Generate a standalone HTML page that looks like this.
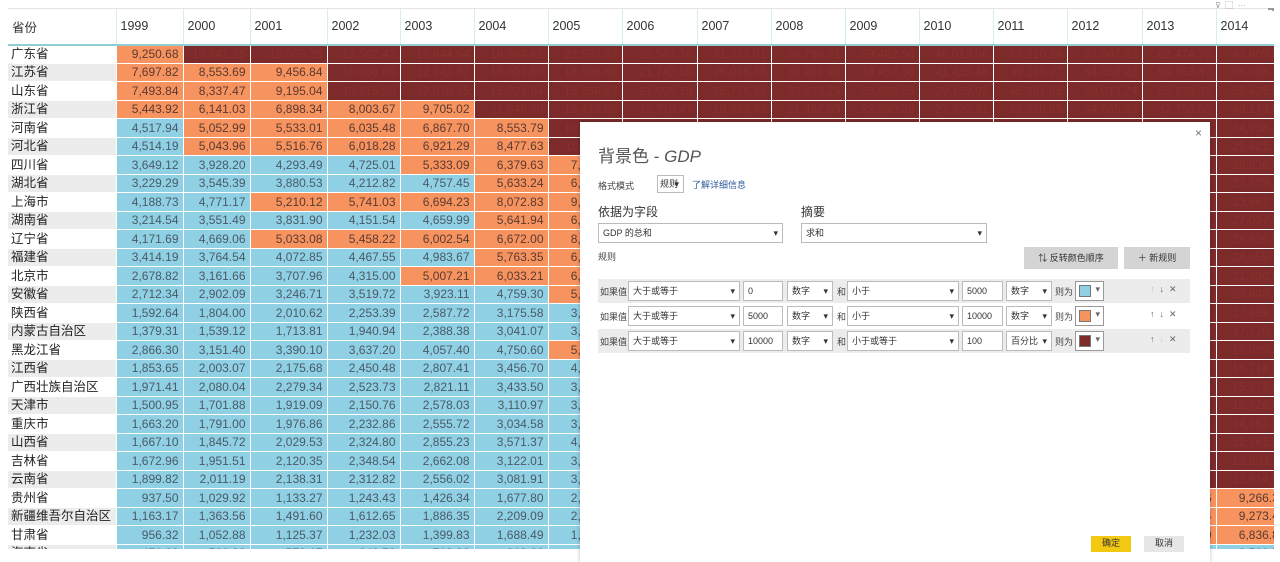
<!DOCTYPE html>
<html><head><meta charset="utf-8">
<style>
*{margin:0;padding:0;box-sizing:border-box}
body{width:1280px;height:549px;overflow:hidden;background:#fff;font-family:"Liberation Sans","Noto Sans CJK SC",sans-serif;position:relative}
#wrap{position:absolute;left:8px;top:8px;width:1266px;height:541px;overflow:hidden}
#tbl{border-collapse:collapse;table-layout:fixed;font-size:12px;width:1282px;min-width:1282px}
#tbl th{height:36px;font-weight:normal;text-align:left;padding-left:4px;color:#333;font-size:12.5px;border-left:1px solid #d6eef0;border-top:1px solid #e4e4e4;border-bottom:2px solid #8fcfd4;background:#fff}
#tbl th:first-child{border-left:none}
#tbl td{height:18.5px;text-align:right;padding-right:4px;white-space:nowrap;overflow:hidden;border:1px solid rgba(255,255,255,.2);line-height:16px}
#tbl td:first-child{text-align:left;padding-left:3px;font-size:12.5px;color:#222;background:#fff;border:none;border-bottom:1px solid #fff}
#tbl tr:nth-child(odd) td:first-child{background:#ececec}
.b{background:#8fd0e4;color:#4a5a66}
.o{background:#f7935f;color:#5a3a30}
.d{background:#7d2a2a;color:#873231}
#dlg{position:absolute;left:580px;top:122px;width:630px;height:440px;background:#fff;box-shadow:0 0 4px rgba(0,0,0,.25);font-size:9px;color:#444}
#dlg .a{position:absolute;white-space:nowrap}
.sel{position:absolute;border:1px solid #bbb;background:#fff;height:20px;line-height:18px;padding-left:4px;font-size:9px;color:#333}
.sel:after{content:"▾";position:absolute;right:4px;top:0;font-size:9px}
.inp{position:absolute;border:1px solid #bbb;background:#fff;height:20px;line-height:18px;padding-left:4px;font-size:9px;color:#333}
.rule{position:absolute;left:18px;width:592px;height:24px}
.sw{position:absolute;width:29px;height:20px;border:1px solid #999;background:#fff}
.sw i{position:absolute;left:3px;top:3px;width:12px;height:12px;border:1px solid #777}
.sw:after{content:"▾";position:absolute;right:3px;top:2px;font-size:9px;color:#666}
</style></head><body>
<div id="wrap">
<table id="tbl">
<colgroup><col style="width:108px"><col style="width:67px"><col style="width:67px"><col style="width:77px"><col style="width:73px"><col style="width:74px"><col style="width:74px"><col style="width:74px"><col style="width:75px"><col style="width:74px"><col style="width:74px"><col style="width:74px"><col style="width:74px"><col style="width:74px"><col style="width:75px"><col style="width:74px"><col style="width:74px"></colgroup>
<tr><th>省份</th><th>1999</th><th>2000</th><th>2001</th><th>2002</th><th>2003</th><th>2004</th><th>2005</th><th>2006</th><th>2007</th><th>2008</th><th>2009</th><th>2010</th><th>2011</th><th>2012</th><th>2013</th><th>2014</th></tr>
<tr><td>广东省</td><td class="o">9,250.68</td><td class="d">10,741.25</td><td class="d">12,039.25</td><td class="d">13,502.42</td><td class="d">15,844.64</td><td class="d">18,864.62</td><td class="d">22,557.37</td><td class="d">26,587.76</td><td class="d">31,777.01</td><td class="d">36,796.71</td><td class="d">39,482.56</td><td class="d">46,013.06</td><td class="d">53,210.28</td><td class="d">57,067.92</td><td class="d">62,474.79</td><td class="d">67,809.85</td></tr>
<tr><td>江苏省</td><td class="o">7,697.82</td><td class="o">8,553.69</td><td class="o">9,456.84</td><td class="d">10,606.85</td><td class="d">12,442.87</td><td class="d">15,003.60</td><td class="d">18,598.69</td><td class="d">21,742.05</td><td class="d">26,018.48</td><td class="d">30,981.98</td><td class="d">34,457.30</td><td class="d">41,425.48</td><td class="d">49,110.27</td><td class="d">54,058.22</td><td class="d">59,753.37</td><td class="d">65,088.32</td></tr>
<tr><td>山东省</td><td class="o">7,493.84</td><td class="o">8,337.47</td><td class="o">9,195.04</td><td class="d">10,275.50</td><td class="d">12,078.15</td><td class="d">15,021.84</td><td class="d">18,366.87</td><td class="d">21,900.19</td><td class="d">25,776.91</td><td class="d">30,933.28</td><td class="d">33,896.65</td><td class="d">39,169.92</td><td class="d">45,361.85</td><td class="d">50,013.24</td><td class="d">55,230.32</td><td class="d">59,426.59</td></tr>
<tr><td>浙江省</td><td class="o">5,443.92</td><td class="o">6,141.03</td><td class="o">6,898.34</td><td class="o">8,003.67</td><td class="o">9,705.02</td><td class="d">11,648.70</td><td class="d">13,417.68</td><td class="d">15,718.47</td><td class="d">18,753.73</td><td class="d">21,462.69</td><td class="d">22,990.35</td><td class="d">27,722.31</td><td class="d">32,318.85</td><td class="d">34,665.33</td><td class="d">37,756.58</td><td class="d">40,173.03</td></tr>
<tr><td>河南省</td><td class="b">4,517.94</td><td class="o">5,052.99</td><td class="o">5,533.01</td><td class="o">6,035.48</td><td class="o">6,867.70</td><td class="o">8,553.79</td><td class="d">10,587.42</td><td class="d">12,362.79</td><td class="d">15,012.46</td><td class="d">18,018.53</td><td class="d">19,480.46</td><td class="d">23,092.36</td><td class="d">26,931.03</td><td class="d">29,599.31</td><td class="d">32,191.30</td><td class="d">34,938.24</td></tr>
<tr><td>河北省</td><td class="b">4,514.19</td><td class="o">5,043.96</td><td class="o">5,516.76</td><td class="o">6,018.28</td><td class="o">6,921.29</td><td class="o">8,477.63</td><td class="d">10,012.11</td><td class="d">11,467.60</td><td class="d">13,607.32</td><td class="d">16,011.97</td><td class="d">17,235.48</td><td class="d">20,394.26</td><td class="d">24,515.76</td><td class="d">26,575.01</td><td class="d">28,442.95</td><td class="d">29,421.15</td></tr>
<tr><td>四川省</td><td class="b">3,649.12</td><td class="b">3,928.20</td><td class="b">4,293.49</td><td class="b">4,725.01</td><td class="o">5,333.09</td><td class="o">6,379.63</td><td class="o">7,385.10</td><td class="o">8,690.24</td><td class="d">10,562.39</td><td class="d">12,601.23</td><td class="d">14,151.28</td><td class="d">17,185.48</td><td class="d">21,026.68</td><td class="d">23,872.80</td><td class="d">26,392.07</td><td class="d">28,536.66</td></tr>
<tr><td>湖北省</td><td class="b">3,229.29</td><td class="b">3,545.39</td><td class="b">3,880.53</td><td class="b">4,212.82</td><td class="b">4,757.45</td><td class="o">5,633.24</td><td class="o">6,590.19</td><td class="o">7,617.47</td><td class="o">9,333.40</td><td class="d">11,328.92</td><td class="d">12,961.10</td><td class="d">15,967.61</td><td class="d">19,632.26</td><td class="d">22,250.45</td><td class="d">24,791.83</td><td class="d">27,379.22</td></tr>
<tr><td>上海市</td><td class="b">4,188.73</td><td class="b">4,771.17</td><td class="o">5,210.12</td><td class="o">5,741.03</td><td class="o">6,694.23</td><td class="o">8,072.83</td><td class="o">9,247.66</td><td class="d">10,572.24</td><td class="d">12,494.01</td><td class="d">14,069.86</td><td class="d">15,046.45</td><td class="d">17,165.98</td><td class="d">19,195.69</td><td class="d">20,181.72</td><td class="d">21,818.15</td><td class="d">23,567.70</td></tr>
<tr><td>湖南省</td><td class="b">3,214.54</td><td class="b">3,551.49</td><td class="b">3,831.90</td><td class="b">4,151.54</td><td class="b">4,659.99</td><td class="o">5,641.94</td><td class="o">6,596.10</td><td class="o">7,688.67</td><td class="o">9,439.60</td><td class="d">11,555.00</td><td class="d">13,059.69</td><td class="d">16,037.96</td><td class="d">19,669.56</td><td class="d">22,154.23</td><td class="d">24,621.67</td><td class="d">27,037.32</td></tr>
<tr><td>辽宁省</td><td class="b">4,171.69</td><td class="b">4,669.06</td><td class="o">5,033.08</td><td class="o">5,458.22</td><td class="o">6,002.54</td><td class="o">6,672.00</td><td class="o">8,047.26</td><td class="o">9,304.52</td><td class="d">11,164.30</td><td class="d">13,668.58</td><td class="d">15,212.49</td><td class="d">18,457.27</td><td class="d">22,226.70</td><td class="d">24,846.43</td><td class="d">27,213.22</td><td class="d">28,626.58</td></tr>
<tr><td>福建省</td><td class="b">3,414.19</td><td class="b">3,764.54</td><td class="b">4,072.85</td><td class="b">4,467.55</td><td class="b">4,983.67</td><td class="o">5,763.35</td><td class="o">6,554.69</td><td class="o">7,583.85</td><td class="o">9,248.53</td><td class="d">10,823.01</td><td class="d">12,236.53</td><td class="d">14,737.12</td><td class="d">17,560.18</td><td class="d">19,701.78</td><td class="d">21,868.49</td><td class="d">24,055.76</td></tr>
<tr><td>北京市</td><td class="b">2,678.82</td><td class="b">3,161.66</td><td class="b">3,707.96</td><td class="b">4,315.00</td><td class="o">5,007.21</td><td class="o">6,033.21</td><td class="o">6,969.52</td><td class="o">8,117.78</td><td class="o">9,846.81</td><td class="d">11,115.00</td><td class="d">12,153.03</td><td class="d">14,113.58</td><td class="d">16,251.93</td><td class="d">17,879.40</td><td class="d">19,800.81</td><td class="d">21,330.83</td></tr>
<tr><td>安徽省</td><td class="b">2,712.34</td><td class="b">2,902.09</td><td class="b">3,246.71</td><td class="b">3,519.72</td><td class="b">3,923.11</td><td class="b">4,759.30</td><td class="o">5,350.17</td><td class="o">6,112.50</td><td class="o">7,360.92</td><td class="o">8,851.66</td><td class="d">10,062.82</td><td class="d">12,359.33</td><td class="d">15,300.65</td><td class="d">17,212.05</td><td class="d">19,229.34</td><td class="d">20,848.75</td></tr>
<tr><td>陕西省</td><td class="b">1,592.64</td><td class="b">1,804.00</td><td class="b">2,010.62</td><td class="b">2,253.39</td><td class="b">2,587.72</td><td class="b">3,175.58</td><td class="b">3,933.72</td><td class="b">4,743.61</td><td class="o">5,757.29</td><td class="o">7,314.58</td><td class="o">8,169.80</td><td class="d">10,123.48</td><td class="d">12,512.30</td><td class="d">14,453.68</td><td class="d">16,205.45</td><td class="d">17,689.94</td></tr>
<tr><td>内蒙古自治区</td><td class="b">1,379.31</td><td class="b">1,539.12</td><td class="b">1,713.81</td><td class="b">1,940.94</td><td class="b">2,388.38</td><td class="b">3,041.07</td><td class="b">3,905.03</td><td class="b">4,944.25</td><td class="o">6,423.18</td><td class="o">8,496.20</td><td class="o">9,740.25</td><td class="d">11,672.00</td><td class="d">14,359.88</td><td class="d">15,880.58</td><td class="d">16,916.50</td><td class="d">17,770.19</td></tr>
<tr><td>黑龙江省</td><td class="b">2,866.30</td><td class="b">3,151.40</td><td class="b">3,390.10</td><td class="b">3,637.20</td><td class="b">4,057.40</td><td class="b">4,750.60</td><td class="o">5,513.70</td><td class="o">6,211.80</td><td class="o">7,104.00</td><td class="o">8,314.37</td><td class="o">8,587.00</td><td class="d">10,368.60</td><td class="d">12,582.00</td><td class="d">13,691.58</td><td class="d">14,454.91</td><td class="d">15,039.38</td></tr>
<tr><td>江西省</td><td class="b">1,853.65</td><td class="b">2,003.07</td><td class="b">2,175.68</td><td class="b">2,450.48</td><td class="b">2,807.41</td><td class="b">3,456.70</td><td class="b">4,056.76</td><td class="b">4,820.53</td><td class="o">5,800.25</td><td class="o">6,971.05</td><td class="o">7,655.18</td><td class="o">9,451.26</td><td class="d">11,702.82</td><td class="d">12,948.88</td><td class="d">14,410.19</td><td class="d">15,714.63</td></tr>
<tr><td>广西壮族自治区</td><td class="b">1,971.41</td><td class="b">2,080.04</td><td class="b">2,279.34</td><td class="b">2,523.73</td><td class="b">2,821.11</td><td class="b">3,433.50</td><td class="b">3,984.10</td><td class="b">4,746.16</td><td class="o">5,823.41</td><td class="o">7,021.00</td><td class="o">7,759.16</td><td class="o">9,569.85</td><td class="d">11,720.87</td><td class="d">13,035.10</td><td class="d">14,449.90</td><td class="d">15,672.89</td></tr>
<tr><td>天津市</td><td class="b">1,500.95</td><td class="b">1,701.88</td><td class="b">1,919.09</td><td class="b">2,150.76</td><td class="b">2,578.03</td><td class="b">3,110.97</td><td class="b">3,905.64</td><td class="b">4,462.74</td><td class="o">5,252.76</td><td class="o">6,719.01</td><td class="o">7,521.85</td><td class="o">9,224.46</td><td class="d">11,307.28</td><td class="d">12,893.88</td><td class="d">14,442.01</td><td class="d">15,726.93</td></tr>
<tr><td>重庆市</td><td class="b">1,663.20</td><td class="b">1,791.00</td><td class="b">1,976.86</td><td class="b">2,232.86</td><td class="b">2,555.72</td><td class="b">3,034.58</td><td class="b">3,467.72</td><td class="b">3,907.23</td><td class="b">4,676.13</td><td class="o">5,793.66</td><td class="o">6,530.01</td><td class="o">7,925.58</td><td class="d">10,011.37</td><td class="d">11,409.60</td><td class="d">12,783.26</td><td class="d">14,262.60</td></tr>
<tr><td>山西省</td><td class="b">1,667.10</td><td class="b">1,845.72</td><td class="b">2,029.53</td><td class="b">2,324.80</td><td class="b">2,855.23</td><td class="b">3,571.37</td><td class="b">4,230.53</td><td class="b">4,878.61</td><td class="o">6,024.45</td><td class="o">7,315.40</td><td class="o">7,358.31</td><td class="o">9,200.86</td><td class="d">11,237.55</td><td class="d">12,112.83</td><td class="d">12,665.25</td><td class="d">12,761.49</td></tr>
<tr><td>吉林省</td><td class="b">1,672.96</td><td class="b">1,951.51</td><td class="b">2,120.35</td><td class="b">2,348.54</td><td class="b">2,662.08</td><td class="b">3,122.01</td><td class="b">3,620.27</td><td class="b">4,275.12</td><td class="o">5,284.69</td><td class="o">6,426.10</td><td class="o">7,278.75</td><td class="o">8,667.58</td><td class="d">10,568.83</td><td class="d">11,939.24</td><td class="d">13,046.40</td><td class="d">13,803.14</td></tr>
<tr><td>云南省</td><td class="b">1,899.82</td><td class="b">2,011.19</td><td class="b">2,138.31</td><td class="b">2,312.82</td><td class="b">2,556.02</td><td class="b">3,081.91</td><td class="b">3,462.73</td><td class="b">3,988.14</td><td class="b">4,772.52</td><td class="o">5,692.12</td><td class="o">6,169.75</td><td class="o">7,224.18</td><td class="o">8,893.12</td><td class="d">10,309.47</td><td class="d">11,832.31</td><td class="d">12,814.59</td></tr>
<tr><td>贵州省</td><td class="b">937.50</td><td class="b">1,029.92</td><td class="b">1,133.27</td><td class="b">1,243.43</td><td class="b">1,426.34</td><td class="b">1,677.80</td><td class="b">2,005.42</td><td class="b">2,338.98</td><td class="b">2,884.11</td><td class="b">3,561.56</td><td class="b">3,912.68</td><td class="b">4,602.16</td><td class="o">5,701.84</td><td class="o">6,852.20</td><td class="o">8,086.86</td><td class="o">9,266.39</td></tr>
<tr><td>新疆维吾尔自治区</td><td class="b">1,163.17</td><td class="b">1,363.56</td><td class="b">1,491.60</td><td class="b">1,612.65</td><td class="b">1,886.35</td><td class="b">2,209.09</td><td class="b">2,604.19</td><td class="b">3,045.26</td><td class="b">3,523.16</td><td class="b">4,183.21</td><td class="b">4,277.05</td><td class="o">5,437.47</td><td class="o">6,610.05</td><td class="o">7,505.31</td><td class="o">8,443.84</td><td class="o">9,273.46</td></tr>
<tr><td>甘肃省</td><td class="b">956.32</td><td class="b">1,052.88</td><td class="b">1,125.37</td><td class="b">1,232.03</td><td class="b">1,399.83</td><td class="b">1,688.49</td><td class="b">1,933.98</td><td class="b">2,277.35</td><td class="b">2,703.98</td><td class="b">3,166.82</td><td class="b">3,387.56</td><td class="b">4,120.75</td><td class="o">5,020.37</td><td class="o">5,650.20</td><td class="o">6,330.69</td><td class="o">6,836.82</td></tr>
<tr><td>海南省</td><td class="b">471.23</td><td class="b">526.82</td><td class="b">579.17</td><td class="b">642.73</td><td class="b">713.96</td><td class="b">819.66</td><td class="b">918.75</td><td class="b">1,065.67</td><td class="b">1,254.17</td><td class="b">1,503.06</td><td class="b">1,654.21</td><td class="b">2,064.50</td><td class="b">2,522.66</td><td class="b">2,855.54</td><td class="b">3,177.56</td><td class="b">3,500.72</td></tr>
</table>
</div>
<div style="position:absolute;left:1215px;top:0;font-size:8px;color:#999">⊽ &nbsp;▢ &nbsp;···</div>
<div style="position:absolute;left:1268px;top:8px;width:6px;height:3px;border-top:2px solid #999;border-right:2px solid #999"></div>

<div id="dlg">
<div class="a" style="right:8px;top:4px;font-size:12px;color:#777">×</div>
<div class="a" style="left:18px;top:20px;font-size:17px;color:#555">背景色 - <i>GDP</i></div>
<div class="a" style="left:18px;top:57px">格式模式</div>
<div class="sel" style="left:77px;top:53px;width:27px;height:18px;line-height:16px;padding-left:2px">规则</div>
<div class="a" style="left:112px;top:56px;color:#2e5b9a">了解详细信息</div>
<div class="a" style="left:18px;top:81px;font-size:12px;color:#333">依据为字段</div>
<div class="a" style="left:221px;top:81px;font-size:12px;color:#333">摘要</div>
<div class="sel" style="left:18px;top:101px;width:185px">GDP 的总和</div>
<div class="sel" style="left:221px;top:101px;width:186px">求和</div>
<div class="a" style="left:18px;top:128px">规则</div>
<div class="a" style="left:444px;top:125px;width:94px;height:22px;background:#d4d4d4;line-height:22px;text-align:center;color:#333">⇅ 反转颜色顺序</div>
<div class="a" style="left:544px;top:125px;width:66px;height:22px;background:#d4d4d4;line-height:22px;text-align:center;color:#333">＋ 新规则</div>

<div class="rule" style="top:157px;background:#ececec">
<div class="a" style="left:2px;top:6px">如果值</div>
<div class="sel" style="left:30px;top:2px;width:112px">大于或等于</div>
<div class="inp" style="left:145px;top:2px;width:40px">0</div>
<div class="sel" style="left:189px;top:2px;width:46px">数字</div>
<div class="a" style="left:239px;top:6px">和</div>
<div class="sel" style="left:249px;top:2px;width:112px">小于</div>
<div class="inp" style="left:364px;top:2px;width:41px">5000</div>
<div class="sel" style="left:408px;top:2px;width:46px">数字</div>
<div class="a" style="left:457px;top:6px">则为</div>
<div class="sw" style="left:477px;top:2px"><i style="background:#8fd0e4"></i></div>
<div class="a" style="left:552px;top:5px;color:#bbb">↑ &nbsp;<span style="color:#666">↓ &nbsp;✕</span></div>
</div>
<div class="rule" style="top:182px">
<div class="a" style="left:2px;top:6px">如果值</div>
<div class="sel" style="left:30px;top:2px;width:112px">大于或等于</div>
<div class="inp" style="left:145px;top:2px;width:40px">5000</div>
<div class="sel" style="left:189px;top:2px;width:46px">数字</div>
<div class="a" style="left:239px;top:6px">和</div>
<div class="sel" style="left:249px;top:2px;width:112px">小于</div>
<div class="inp" style="left:364px;top:2px;width:41px">10000</div>
<div class="sel" style="left:408px;top:2px;width:46px">数字</div>
<div class="a" style="left:457px;top:6px">则为</div>
<div class="sw" style="left:477px;top:2px"><i style="background:#f7935f"></i></div>
<div class="a" style="left:552px;top:5px;color:#666">↑ &nbsp;↓ &nbsp;✕</div>
</div>
<div class="rule" style="top:207px;background:#ececec">
<div class="a" style="left:2px;top:6px">如果值</div>
<div class="sel" style="left:30px;top:2px;width:112px">大于或等于</div>
<div class="inp" style="left:145px;top:2px;width:40px">10000</div>
<div class="sel" style="left:189px;top:2px;width:46px">数字</div>
<div class="a" style="left:239px;top:6px">和</div>
<div class="sel" style="left:249px;top:2px;width:112px">小于或等于</div>
<div class="inp" style="left:364px;top:2px;width:41px">100</div>
<div class="sel" style="left:408px;top:2px;width:46px">百分比</div>
<div class="a" style="left:457px;top:6px">则为</div>
<div class="sw" style="left:477px;top:2px"><i style="background:#7d2a2a"></i></div>
<div class="a" style="left:552px;top:5px;color:#666">↑ <span style="color:#ccc">&nbsp;↓</span> &nbsp;✕</div>
</div>

<div class="a" style="left:511px;top:414px;width:40px;height:16px;background:#f2c811;text-align:center;line-height:14px;color:#333">确定</div>
<div class="a" style="left:564px;top:414px;width:40px;height:16px;background:#e6e6e6;text-align:center;line-height:14px;color:#333">取消</div>
</div>
</body></html>
